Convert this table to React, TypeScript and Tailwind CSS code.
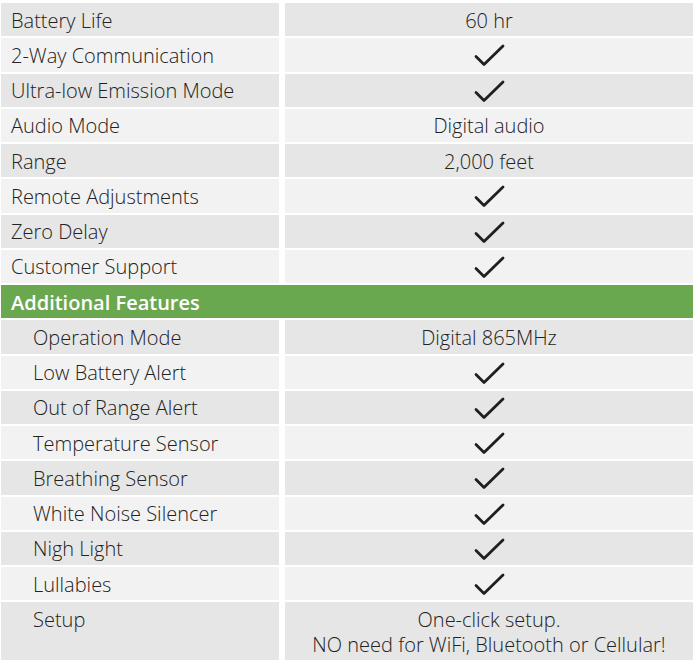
const features: [string, string | null][] = [
  ["Battery Life", "60 hr"],
  ["2-Way Communication", null],
  ["Ultra-low Emission Mode", null],
  ["Audio Mode", "Digital audio"],
  ["Range", "2,000 feet"],
  ["Remote Adjustments", null],
  ["Zero Delay", null],
  ["Customer Support", null],
];

const additional: [string, string | null][] = [
  ["Operation Mode", "Digital 865MHz"],
  ["Low Battery Alert", null],
  ["Out of Range Alert", null],
  ["Temperature Sensor", null],
  ["Breathing Sensor", null],
  ["White Noise Silencer", null],
  ["Nigh Light", null],
  ["Lullabies", null],
];

const Check = () => (
  <svg width="31" height="23" viewBox="0 0 31 23" fill="none">
    <polyline points="2,12.5 10,20.5 29,2" stroke="#1f1f1f" strokeWidth="2.8" strokeLinecap="round" strokeLinejoin="round" />
  </svg>
);

const Row = ({ label, value, dark, indent }: { label: string; value: string | null; dark: boolean; indent?: boolean }) => {
  const bg = dark ? "bg-[#e6e6e6]" : "bg-[#f2f2f2]";
  return (
    <>
      <div className={`${bg} h-[33.25px] pt-[2px] flex items-center ${indent ? "pl-[32px]" : "pl-[10px]"}`}>{label}</div>
      <div className={`${bg} h-[33.25px] pt-[2px] flex items-center justify-center`}>{value ?? <Check />}</div>
    </>
  );
};

export default function App() {
  return (
    <div className="w-[695px] h-[665px] bg-white pt-[3px] pl-[1px] text-[#222] text-[20px] font-['Open_Sans',sans-serif] font-light">
      <div className="grid grid-cols-[278px_408px] gap-x-[6px] gap-y-[2px]">
        {features.map(([l, v], i) => (
          <Row key={l} label={l} value={v} dark={i % 2 === 0} />
        ))}
        <div className="col-span-2 bg-[#6aa84f] h-[33.25px] pt-[2px] flex items-center pl-[10px] text-white font-semibold">
          Additional Features
        </div>
        {additional.map(([l, v], i) => (
          <Row key={l} label={l} value={v} dark={i % 2 === 0} indent />
        ))}
        <div className="bg-[#e6e6e6] h-[58px] pl-[32px] pt-[6px] leading-[24.5px]">Setup</div>
        <div className="bg-[#e6e6e6] h-[58px] pt-[6px] leading-[24.5px] text-center">
          One-click setup.
          <br />
          NO need for WiFi, Bluetooth or Cellular!
        </div>
      </div>
    </div>
  );
}
